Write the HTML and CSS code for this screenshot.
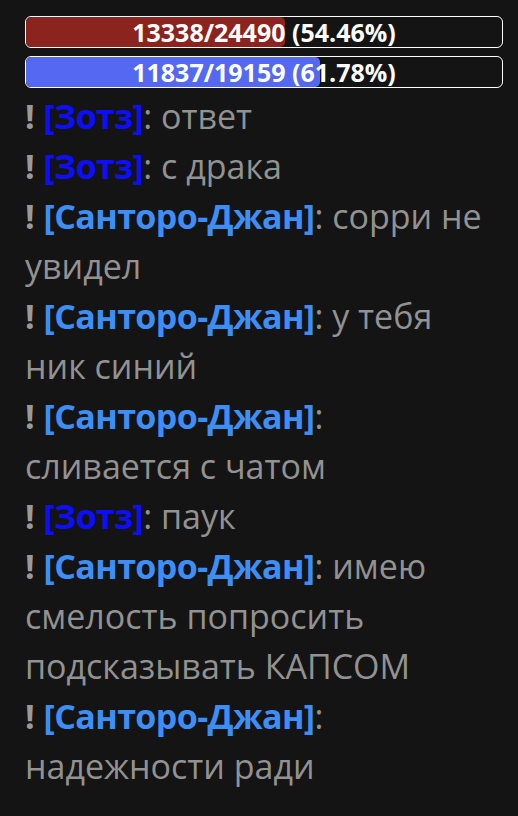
FILE: index.html
```html
<!DOCTYPE html>
<html lang="ru">
<head>
  <meta charset="UTF-8" />
  <meta name="viewport" content="width=device-width, initial-scale=1.0" />
  <title>Чат</title>
  <link rel="stylesheet" href="styles.css">
</head>
<body>
  <div class="panel">
    <div class="bars">
      <div class="bar">
        <div class="fill hp" style="width: 54.46%"></div>
        <span class="bar-text">13338/24490 (54.46%)</span>
      </div>
      <div class="bar">
        <div class="fill mp" style="width: 61.78%"></div>
        <span class="bar-text">11837/19159 (61.78%)</span>
      </div>
    </div>
    <div class="chat">
      <p class="msg"><span class="bang">!</span> <span class="nick dark">[Зотз]</span>: ответ</p>
      <p class="msg"><span class="bang">!</span> <span class="nick dark">[Зотз]</span>: с драка</p>
      <p class="msg"><span class="bang">!</span> <span class="nick">[Санторо-Джан]</span>: сорри не<br>увидел</p>
      <p class="msg"><span class="bang">!</span> <span class="nick">[Санторо-Джан]</span>: у тебя<br>ник синий</p>
      <p class="msg"><span class="bang">!</span> <span class="nick">[Санторо-Джан]</span>:<br>сливается с чатом</p>
      <p class="msg"><span class="bang">!</span> <span class="nick dark">[Зотз]</span>: паук</p>
      <p class="msg"><span class="bang">!</span> <span class="nick">[Санторо-Джан]</span>: имею<br>смелость попросить<br>подсказывать КАПСОМ</p>
      <p class="msg"><span class="bang">!</span> <span class="nick">[Санторо-Джан]</span>:<br>надежности ради</p>
    </div>
  </div>
</body>
</html>
```

FILE: styles.css
```css
body {
  margin: 0;
  padding: 0;
  background-color: #141414;
  font-family: 'Open Sans', 'Noto Sans', sans-serif;
  color: #929292;
}
.panel {
  padding: 16px 15px 0 25px;
}
.bars {
  display: flex;
  flex-direction: column;
  gap: 8px;
  margin-bottom: 3px;
}
.bar {
  position: relative;
  height: 30px;
  border: 1px solid #fff;
  border-radius: 6px;
  overflow: hidden;
  display: flex;
  align-items: center;
  justify-content: center;
}
.fill {
  position: absolute;
  left: 0;
  top: 0;
  bottom: 0;
  border-radius: 5px;
}
.fill.hp {
  background-color: #8b231f;
}
.fill.mp {
  background-color: #5468f2;
}
.bar-text {
  position: relative;
  color: #fff;
  font-weight: bold;
  font-size: 25px;
  line-height: 30px;
}
.chat {
  font-size: 34px;
  line-height: 50px;
}
.msg {
  margin: 0;
  white-space: nowrap;
}
.bang {
  font-weight: bold;
  color: #9a9a9a;
}
.nick {
  font-weight: bold;
  color: #3d8ff7;
  letter-spacing: -0.6px;
}
.nick.dark {
  color: #0d0dff;
}
```
